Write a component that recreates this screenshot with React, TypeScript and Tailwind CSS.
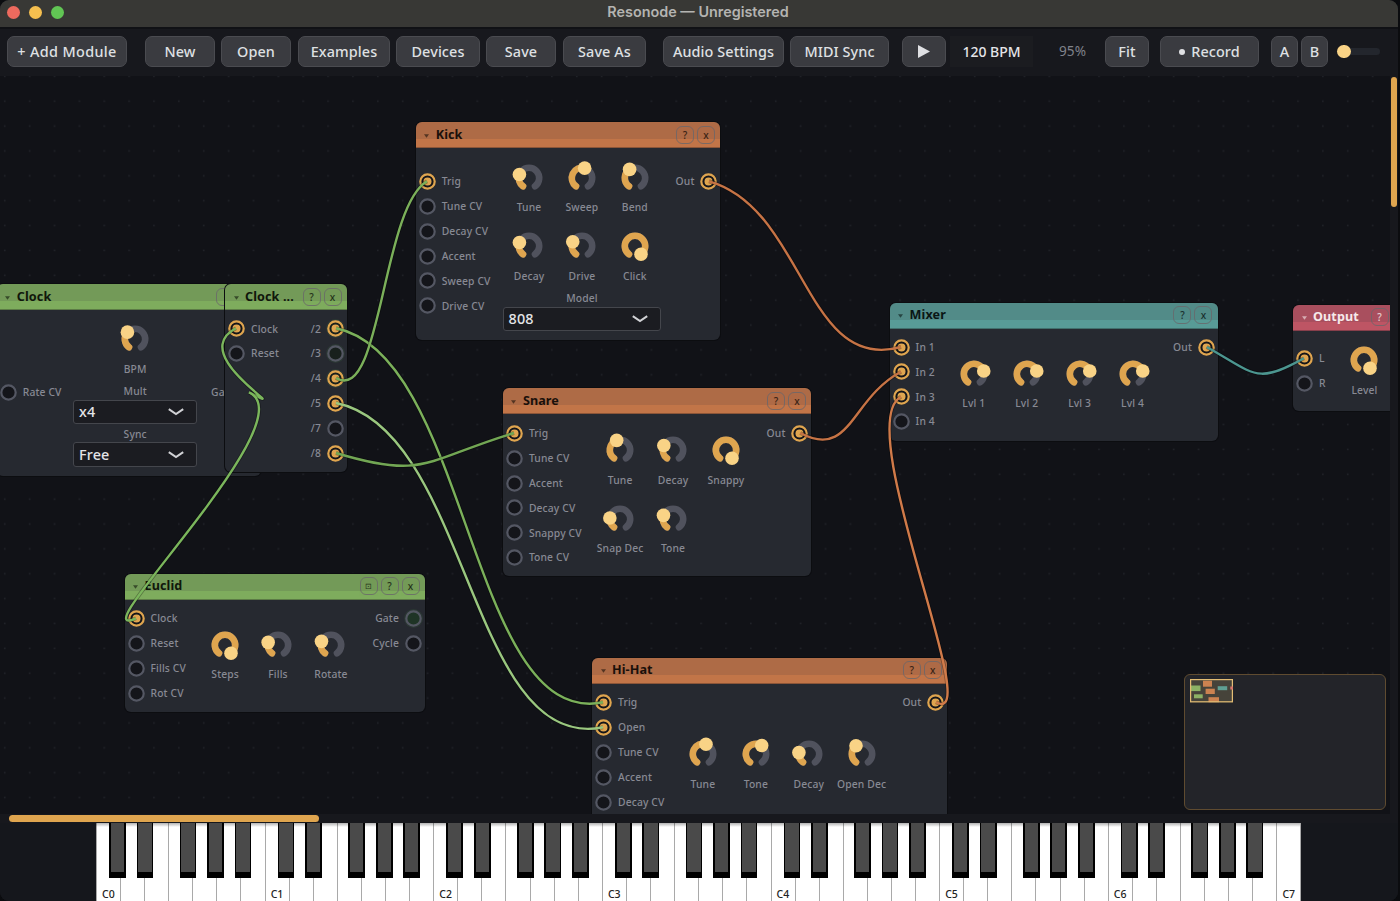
import clsx from 'clsx';

type KnobDef = { label: string; angle: number };
type SelectDef = { label: string; value: string };
type Port = { label: string; on?: boolean; lit?: boolean; gate?: boolean };

type ModuleDef = {
  id: string;
  title: string;
  tone: keyof typeof tones;
  box: string;
  portPad: string;
  knobBox?: string;
  knobs?: KnobDef[];
  selects?: SelectDef[];
  ins: Port[];
  outs: Port[];
  buttons: string[];
};

const tones = {
  orange: 'bg-[linear-gradient(#ae6b46_0_70%,#c27548_70%)] text-[#1a100a]',
  green: 'bg-[linear-gradient(#739a58_0_70%,#7eac5d_70%)] text-[#10170b]',
  teal: 'bg-[linear-gradient(#528b88_0_70%,#589b97_70%)] text-[#0b1615]',
  red: 'bg-[linear-gradient(#a94f5e_0_70%,#be5564_70%)] text-[#f6e9ea]',
};

const modules: ModuleDef[] = [
  {
    id: 'kick',
    title: 'Kick',
    tone: 'orange',
    box: 'left-[415.7px] top-[46px] w-[304.8px] h-[218px]',
    portPad: 'pt-[21px]',
    knobBox: 'left-[86.9px] pt-[13.7px] w-[158.7px]',
    knobs: [
      { label: 'Tune', angle: -70 },
      { label: 'Sweep', angle: 15 },
      { label: 'Bend', angle: -32 },
      { label: 'Decay', angle: -70 },
      { label: 'Drive', angle: -65 },
      { label: 'Click', angle: 144 },
    ],
    selects: [{ label: 'Model', value: '808' }],
    ins: [
      { label: 'Trig', on: true },
      { label: 'Tune CV' },
      { label: 'Decay CV' },
      { label: 'Accent' },
      { label: 'Sweep CV' },
      { label: 'Drive CV' },
    ],
    outs: [{ label: 'Out', on: true }],
    buttons: ['?', 'x'],
  },
  {
    id: 'clock',
    title: 'Clock',
    tone: 'green',
    box: 'left-[-3.2px] top-[208px] w-[264px] h-[191.7px]',
    portPad: 'pt-[70.2px]',
    knobBox: 'left-[76.2px] pt-[13.3px] w-[124.4px]',
    knobs: [{ label: 'BPM', angle: -48 }],
    selects: [
      { label: 'Mult', value: 'x4' },
      { label: 'Sync', value: 'Free' },
    ],
    ins: [{ label: 'Rate CV' }],
    outs: [{ label: 'Gate', on: true }],
    buttons: ['', ''],
  },
  {
    id: 'clock-div',
    title: 'Clock ...',
    tone: 'green',
    box: 'left-[225px] top-[208px] w-[122px] h-[187.7px]',
    portPad: 'pt-[6.4px]',
    ins: [{ label: 'Clock', on: true }, { label: 'Reset' }],
    outs: [
      { label: '/2', on: true, lit: true },
      { label: '/3', lit: true },
      { label: '/4', on: true, lit: true },
      { label: '/5', on: true },
      { label: '/7' },
      { label: '/8', on: true },
    ],
    buttons: ['?', 'x'],
  },
  {
    id: 'snare',
    title: 'Snare',
    tone: 'orange',
    box: 'left-[502.9px] top-[312.3px] w-[308.6px] h-[188px]',
    portPad: 'pt-[6.6px]',
    knobBox: 'left-[90.8px] pt-[20px] w-[158.7px]',
    knobs: [
      { label: 'Tune', angle: -19 },
      { label: 'Decay', angle: -64 },
      { label: 'Snappy', angle: 144 },
      { label: 'Snap Dec', angle: -84 },
      { label: 'Tone', angle: -69 },
    ],
    ins: [
      { label: 'Trig', on: true },
      { label: 'Tune CV' },
      { label: 'Accent' },
      { label: 'Decay CV' },
      { label: 'Snappy CV' },
      { label: 'Tone CV' },
    ],
    outs: [{ label: 'Out', on: true }],
    buttons: ['?', 'x'],
  },
  {
    id: 'euclid',
    title: 'Euclid',
    tone: 'green',
    box: 'left-[124.5px] top-[497.7px] w-[300.5px] h-[138.3px]',
    portPad: 'pt-[6.4px]',
    knobBox: 'left-[74.2px] pt-[29.2px] w-[158.7px]',
    knobs: [
      { label: 'Steps', angle: 144 },
      { label: 'Fills', angle: -75 },
      { label: 'Rotate', angle: -69 },
    ],
    ins: [{ label: 'Clock', on: true }, { label: 'Reset' }, { label: 'Fills CV' }, { label: 'Rot CV' }],
    outs: [{ label: 'Gate', gate: true }, { label: 'Cycle' }],
    buttons: ['⊡', '?', 'x'],
  },
  {
    id: 'hihat',
    title: 'Hi-Hat',
    tone: 'orange',
    box: 'left-[592px] top-[581.7px] w-[355.3px] h-[188px]',
    portPad: 'pt-[6.6px]',
    knobBox: 'left-[84.5px] pt-[54.4px] w-[211.6px]',
    knobs: [
      { label: 'Tune', angle: 17 },
      { label: 'Tone', angle: 34 },
      { label: 'Decay', angle: -82 },
      { label: 'Open Dec', angle: -36 },
    ],
    ins: [
      { label: 'Trig', on: true },
      { label: 'Open', on: true },
      { label: 'Tune CV' },
      { label: 'Accent' },
      { label: 'Decay CV' },
    ],
    outs: [{ label: 'Out', on: true }],
    buttons: ['?', 'x'],
  },
  {
    id: 'mixer',
    title: 'Mixer',
    tone: 'teal',
    box: 'left-[889.6px] top-[226.5px] w-[328.4px] h-[138px]',
    portPad: 'pt-[6.2px]',
    knobBox: 'left-[57.8px] pt-[29.2px] w-[211.6px]',
    knobs: [
      { label: 'Lvl 1', angle: 73 },
      { label: 'Lvl 2', angle: 73 },
      { label: 'Lvl 3', angle: 73 },
      { label: 'Lvl 4', angle: 73 },
    ],
    ins: [
      { label: 'In 1', on: true },
      { label: 'In 2', on: true },
      { label: 'In 3', on: true },
      { label: 'In 4' },
    ],
    outs: [{ label: 'Out', on: true }],
    buttons: ['?', 'x'],
  },
  {
    id: 'output',
    title: 'Output',
    tone: 'red',
    box: 'left-[1293px] top-[228.7px] w-[122px] h-[106.7px]',
    portPad: 'pt-[15.2px]',
    knobBox: 'left-[45px] pt-[13.7px] w-[52.9px]',
    knobs: [{ label: 'Level', angle: 144 }],
    ins: [{ label: 'L', on: true }, { label: 'R' }],
    outs: [],
    buttons: ['?', ''],
  },
];

type Cable = { from: [number, number]; to: [number, number]; color: string; reach?: number };

const SAG = 27;

const cables: Cable[] = [
  { from: [336, 328.3], to: [603, 702.3], color: '#7bb05a' },
  { from: [336, 378], to: [427, 181.3], color: '#7bb05a' },
  { from: [336, 403], to: [603, 727.3], color: '#9ac77f' },
  { from: [336, 453], to: [514, 433], color: '#72a654' },
  { from: [249, 392.3], to: [236, 328.3], color: '#7bb65c', reach: 52 },
  { from: [249, 392.3], to: [136, 618.3], color: '#7bb65c', reach: 60 },
  { from: [709, 181.3], to: [901, 347], color: '#c67345' },
  { from: [800.3, 433], to: [901, 371.7], color: '#c67345' },
  { from: [936, 702.3], to: [901, 396.7], color: '#d07a49', reach: 51 },
  { from: [1206.7, 347], to: [1304, 358.2], color: '#4c9690' },
];

function cablePath({ from, to, reach }: Cable) {
  const d = reach ?? Math.abs(to[0] - from[0]) / 2;
  return `M${from[0]} ${from[1]} C${from[0] + d} ${from[1] + SAG} ${to[0] - d} ${to[1] + SAG} ${to[0]} ${to[1]}`;
}

function polar(angle: number) {
  const rad = (angle * Math.PI) / 180;
  return [16 + 10.2 * Math.sin(rad), 16 - 10.2 * Math.cos(rad)];
}

function arc(a: number, b: number) {
  const [x1, y1] = polar(a);
  const [x2, y2] = polar(b);
  return `M${x1} ${y1} A10.2 10.2 0 ${b - a > 180 ? 1 : 0} 1 ${x2} ${y2}`;
}

function Knob({ label, angle }: KnobDef) {
  const [x, y] = polar(angle);
  return (
    <div className="flex flex-col items-center">
      <svg className="size-8 overflow-visible" viewBox="0 0 32 32" fill="none" strokeLinecap="round" strokeWidth="6.6">
        <path d={arc(-144, 144)} stroke="#50525d" />
        <path d={arc(-144, angle)} stroke="#dfa54f" />
        <circle cx={x} cy={y} r="6.8" fill="#f9d386" />
      </svg>
      <span className="mt-[6.5px] h-3.5 leading-3.5 whitespace-nowrap">{label}</span>
    </div>
  );
}

function Select({ label, value }: SelectDef) {
  return (
    <div className="flex flex-col">
      <span className="h-3.5 leading-3.5 text-center">{label}</span>
      <div className="mt-[1.5px] h-[24.7px] flex items-center justify-between rounded-[3px] border border-[#44464c] bg-[#1b1c21] pl-[5px] pr-3 text-[14.4px] font-medium text-[#e4e5e8]">
        {value}
        <svg className="w-4 h-2" viewBox="0 0 16 8" fill="none" stroke="#d0d1d4" strokeWidth="2.1">
          <path d="M0.8 1.2 L8 6 L15.2 1.2" />
        </svg>
      </div>
    </div>
  );
}

function Jack({ on, lit, gate }: Port) {
  return (
    <svg className="size-[17px] shrink-0 overflow-visible" viewBox="0 0 17 17">
      {(lit || gate) && <circle cx="8.5" cy="8.5" r="9.4" fill="#4f9a4f" opacity="0.12" />}
      <circle
        cx="8.5"
        cy="8.5"
        r="7.2"
        fill={gate ? '#1f3426' : lit ? '#18201d' : '#14151a'}
        stroke={on ? '#dfa54f' : '#545763'}
        strokeWidth="2.2"
      />
      {on && <circle cx="8.5" cy="8.5" r="4" fill="#dfa54f" />}
    </svg>
  );
}

function Module({ m }: { m: ModuleDef }) {
  return (
    <section className={clsx('absolute flex flex-col overflow-hidden rounded-[6px] bg-[#262930] shadow-[0_0_0_1px_#0c0d10]', m.box)}>
      <header className={clsx('h-[26px] shrink-0 flex items-center border-b border-black/20 pl-[8.5px] pr-[5.5px]', tones[m.tone])}>
        <svg className="w-[5px] h-1 mt-[2px] opacity-60" viewBox="0 0 5 4" fill="currentColor">
          <path d="M0 0.3 H5 L2.5 3.8 Z" />
        </svg>
        <h2 className="pl-[6.5px] pt-[1.5px] text-[12.6px] font-bold tracking-[0.1px] whitespace-nowrap">{m.title}</h2>
        <div className="ml-auto flex gap-[3px]">
          {m.buttons.map((b, i) => (
            <span
              key={i}
              className={clsx(
                'size-[18px] flex items-center justify-center rounded-[6px] border border-[#6a676b] font-medium leading-none opacity-80',
                b === '⊡' ? 'text-[8px]' : 'text-[10px]',
              )}
            >
              {b}
            </span>
          ))}
        </div>
      </header>
      <div className="relative flex-1 flex justify-between px-[3px] text-[10.3px] font-medium tracking-[0.14px] text-[#888a94]">
        <div className={m.portPad}>
          {m.ins.map((p) => (
            <div key={p.label} className="h-[24.87px] flex items-center gap-[6px] whitespace-nowrap">
              <Jack {...p} />
              <span className="pt-px">{p.label}</span>
            </div>
          ))}
        </div>
        {m.knobs && (
          <div className={clsx('absolute top-0', m.knobBox)}>
            <div className={clsx('grid gap-y-4', m.knobs.length === 1 ? 'grid-cols-1' : m.knobs.length === 4 ? 'grid-cols-4' : 'grid-cols-3')}>
              {m.knobs.map((k) => (
                <Knob key={k.label} {...k} />
              ))}
            </div>
            {m.selects && (
              <div className="mt-[8.5px] flex flex-col gap-[2.3px]">
                {m.selects.map((s) => (
                  <Select key={s.label} {...s} />
                ))}
              </div>
            )}
          </div>
        )}
        <div className={m.portPad}>
          {m.outs.map((p) => (
            <div key={p.label} className="h-[24.87px] flex items-center justify-end gap-[6px] whitespace-nowrap">
              <span className="pt-px">{p.label}</span>
              <Jack {...p} />
            </div>
          ))}
        </div>
      </div>
    </section>
  );
}

function Minimap() {
  return (
    <div className="absolute left-[1184px] top-[598px] w-[202px] h-[136px] rounded-[6px] border border-[#5f4b30] bg-[#232429]">
      <svg className="block ml-[5px] mt-[4px] w-[43px] h-6" viewBox="0 0 43 24">
        <rect width="43" height="23.3" fill="#46433a" />
        <rect x="0.5" y="6.5" width="10" height="5.6" fill="#8cb165" />
        <rect x="4" y="15.3" width="8.7" height="4" fill="#8cb165" />
        <rect x="13" y="1.7" width="9" height="6" fill="#cb8250" />
        <rect x="15.6" y="9.7" width="9.2" height="5.3" fill="#cb8250" />
        <rect x="18.5" y="18.2" width="10.5" height="5" fill="#cb8250" />
        <rect x="27.7" y="7.2" width="9.5" height="4" fill="#5f9f93" />
        <rect x="0.6" y="0.6" width="41.8" height="22.2" fill="none" stroke="#e3bd74" strokeWidth="1.2" />
        <rect x="40.3" y="7.5" width="2.7" height="3" fill="#d9756b" />
      </svg>
    </div>
  );
}

function Button({ className, children }: { className: string; children: React.ReactNode }) {
  return (
    <button className={clsx('h-[31px] shrink-0 flex items-center justify-center rounded-[7px] border border-[#4a4b50] bg-[#3a3b40] text-[#dfe0e3] whitespace-nowrap', className)}>
      {children}
    </button>
  );
}

function Toolbar() {
  return (
    <div className="h-[49px] shrink-0 flex items-center pl-[7px] pb-[2px] border-t-2 border-[#101115] bg-[#17181d] text-[14.4px] font-medium tracking-[0.1px]">
      <Button className="w-[120px] tracking-[0.35px]">+ Add Module</Button>
      <Button className="w-[70px] ml-[18px]">New</Button>
      <Button className="w-[70px] ml-[6px]">Open</Button>
      <Button className="w-[92px] ml-[7px]">Examples</Button>
      <Button className="w-[84px] ml-[6px]">Devices</Button>
      <Button className="w-[70px] ml-[6px]">Save</Button>
      <Button className="w-[83px] ml-[7px]">Save As</Button>
      <Button className="w-[121px] ml-[17px]">Audio Settings</Button>
      <Button className="w-[99px] ml-[6px]">MIDI Sync</Button>
      <Button className="w-[44px] ml-[13px]">
        <svg className="w-3 h-[13px]" viewBox="0 0 12 13" fill="currentColor">
          <path d="M0 0 L12 6.5 L0 13 Z" />
        </svg>
      </Button>
      <span className="w-[83px] h-[31px] ml-[4px] flex items-center justify-center bg-[#1b1c20] text-[14px] tracking-normal text-[#e4e5e8]">120 BPM</span>
      <span className="w-[72px] pl-[7px] text-center text-[13.6px] font-normal text-[#80828b]">95%</span>
      <Button className="w-[44px]">Fit</Button>
      <Button className="w-[99px] ml-[11px] gap-[6px]">
        <i className="size-[6px] rounded-full bg-current" />
        Record
      </Button>
      <Button className="w-[27px] ml-[12px]">A</Button>
      <Button className="w-[27px] ml-[3px]">B</Button>
      <div className="w-[43px] h-[7px] ml-[9px] flex items-center rounded-full bg-[#23262d]">
        <i className="size-[13.5px] shrink-0 rounded-full bg-[#f9d386]" />
      </div>
    </div>
  );
}

const octaves = [0, 1, 2, 3, 4, 5, 6];
const blackKeys = ['left-[13px]', 'left-[40.6px]', 'left-[83.7px]', 'left-[111.2px]', 'left-[138.7px]'];

function WhiteKey({ label }: { label?: string }) {
  return (
    <div className="w-[24.09px] h-full shrink-0 flex items-end border-l border-[#a9a9a9] pl-[5px] text-[10.5px] leading-[13px] font-medium text-[#222]">
      {label}
    </div>
  );
}

function Keyboard() {
  return (
    <div className="h-[78px] shrink-0 flex justify-start bg-[#15171c] pl-24">
      <div className="relative flex border-r border-[#a9a9a9] bg-white">
        {octaves.map((o) => (
          <div key={o} className="relative flex w-[168.63px]">
            {[0, 1, 2, 3, 4, 5, 6].map((k) => (
              <WhiteKey key={k} label={k === 0 ? `C${o}` : undefined} />
            ))}
            {blackKeys.map((pos) => (
              <div key={pos} className={clsx('absolute top-0 z-10 w-[16.8px] h-[55.3px] bg-black px-[1.7px] pb-[6.6px]', pos)}>
                <div className="h-full bg-[#4a4a4a]" />
              </div>
            ))}
          </div>
        ))}
        <WhiteKey label="C7" />
        <div className="absolute inset-x-0 top-0 h-1 bg-linear-to-b from-black/30 to-transparent" />
      </div>
    </div>
  );
}

export default function App() {
  return (
    <div className="w-[1400px] h-[901px] bg-[#0b0c0f]">
      <div className="w-[1398px] h-full flex flex-col overflow-hidden rounded-[9px] bg-[#17181d] font-['Noto_Sans','Open_Sans',sans-serif]">
        <div className="relative h-[27px] shrink-0 flex items-center justify-center bg-[#383835] pb-[3px] pr-[2px]">
          <div className="absolute left-[7px] top-[5.5px] flex gap-[8.6px]">
            <i className="size-[13.3px] rounded-full bg-[#ed6a5e]" />
            <i className="size-[13.3px] rounded-full bg-[#f5bf4f]" />
            <i className="size-[13.3px] rounded-full bg-[#61c554]" />
          </div>
          <h1 className="font-['Inter',sans-serif] text-[14.4px] font-semibold text-[#b4b4b1]">Resonode — Unregistered</h1>
        </div>
        <Toolbar />
        <div className="h-[738px] flex">
          <main className="relative w-[1390px] h-full overflow-hidden bg-[#111217]">
            <svg className="absolute inset-0 size-full">
              <defs>
                <pattern id="dots" x="-8" y="-12" width="24.87" height="24.87" patternUnits="userSpaceOnUse">
                  <rect x="12" y="11.6" width="1.5" height="1.5" fill="#22242a" />
                </pattern>
              </defs>
              <rect width="100%" height="100%" fill="url(#dots)" />
            </svg>
            {modules.map((m) => (
              <Module key={m.id} m={m} />
            ))}
            <svg className="absolute inset-0 size-full pointer-events-none" viewBox="0 76 1390 738" fill="none" strokeLinecap="butt">
              {cables.map((c, i) => (
                <g key={i}>
                  <path d={cablePath(c)} stroke="#000" strokeOpacity="0.3" strokeWidth="4" />
                  <path d={cablePath(c)} stroke={c.color} strokeWidth="2.4" />
                </g>
              ))}
            </svg>
            <Minimap />
          </main>
          <div className="flex-1 pt-px pl-px">
            <div className="w-[6.4px] h-[130px] rounded-full bg-[#dfa54f]" />
          </div>
        </div>
        <div className="h-[9px] shrink-0 pl-[9px] pt-px">
          <div className="w-[310px] h-[7.4px] rounded-full bg-[#dfa54f]" />
        </div>
        <Keyboard />
      </div>
    </div>
  );
}
